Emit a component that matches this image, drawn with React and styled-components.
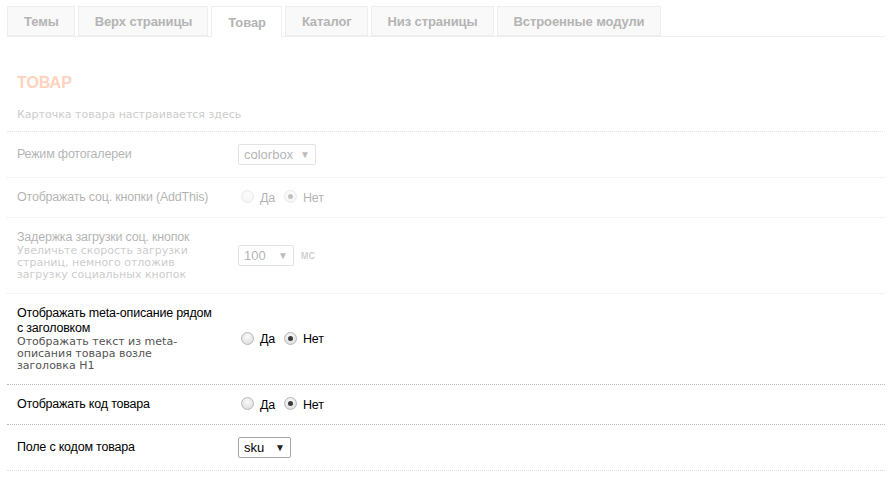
import React from "react";
import styled, { createGlobalStyle } from "styled-components";

const Global = createGlobalStyle`
  html, body { margin: 0; padding: 0; background: #fff; }
  body { font-family: "Liberation Sans", Arial, sans-serif; font-size: 13px; color: #000; }
`;

const Page = styled.div`
  padding: 6px 6px 0 7px;
`;

const TabBar = styled.div`
  display: flex;
  gap: 3px;
  border-bottom: 1px solid #eee;
  height: 30px;
`;

const Tab = styled.div`
  height: ${(p) => (p.$active ? "31px" : "30px")};
  box-sizing: border-box;
  padding: 0 15px 0 16px;
  display: flex;
  align-items: center;
  border: 1px solid #eee;
  border-bottom: ${(p) => (p.$active ? "none" : "1px solid #eee")};
  background: ${(p) => (p.$active ? "#fff" : "#f9f9f9")};
  color: #b4b4b4;
  font-weight: bold;
  font-size: 13px;
  letter-spacing: -0.1px;
  font-family: "Liberation Sans", Arial, sans-serif;
`;

const Heading = styled.h2`
  margin: 37px 0 0;
  padding-left: 10px;
  font-size: 16px;
  line-height: 18px;
  font-weight: bold;
  color: #fdd3bd;
  font-family: "Liberation Sans", Arial, sans-serif;
`;

const Description = styled.p`
  margin: 16px 0 0;
  padding: 0 0 9px 10px;
  font-family: "DejaVu Sans", Verdana, sans-serif;
  font-size: 11px;
  line-height: 14px;
  color: #ccc;
  border-bottom: 1px dotted #e3e3e3;
`;

const Row = styled.div`
  display: flex;
  align-items: center;
  gap: 21px;
  padding: 12px 0 12px 10px;
  border-bottom: 1px dotted ${(p) => (p.$faint ? "#ddd" : "#bbb")};
  opacity: ${(p) => (p.$disabled ? 0.3 : 1)};
`;

const LabelCol = styled.div`
  width: 200px;
  flex: none;
`;

const Label = styled.div`
  font-size: 12.5px;
  letter-spacing: -0.2px;
  line-height: 15px;
  color: #000;
`;

const Hint = styled.div`
  max-width: 180px;
  font-family: "DejaVu Sans", Verdana, sans-serif;
  font-size: 11px;
  line-height: 12px;
  color: #555;
`;

const Value = styled.div`
  display: flex;
  align-items: center;
  gap: 7px;
`;

const Select = styled.div`
  box-sizing: border-box;
  width: ${(p) => p.$w}px;
  height: 21px;
  border: 1px solid #a6a6a6;
  border-radius: 2px;
  background: #fff;
  display: flex;
  align-items: center;
  justify-content: space-between;
  padding: 0 5px 0 5px;
  font-size: 13px;
  color: #000;
`;

const Arrow = styled.span`
  font-size: 10px;
  line-height: 1;
  color: #222;
`;

const Unit = styled.span`
  font-family: "Liberation Mono", monospace;
  font-size: 12px;
  color: #444;
`;

const RadioGroup = styled.div`
  display: flex;
  align-items: center;
  padding-left: 3px;
  height: 14px;
`;

const RadioItem = styled.label`
  display: flex;
  align-items: center;
  gap: 6px;
  margin-right: 9px;
  font-size: 12.5px;
  letter-spacing: -0.2px;
  line-height: 14px;
`;

const RadioDot = styled.span`
  width: 13px;
  height: 13px;
  box-sizing: border-box;
  border-radius: 50%;
  border: 1px solid #b8b8b8;
  background: radial-gradient(circle at 50% 35%, #fafafa 0%, #e6e6e6 60%, #d4d4d4 100%);
  display: flex;
  align-items: center;
  justify-content: center;
  position: relative;
  top: -1px;
  &::after {
    content: "";
    width: 5px;
    height: 5px;
    border-radius: 50%;
    background: #3a3a3a;
    display: ${(p) => (p.$checked ? "block" : "none")};
  }
`;

const Radio = ({ checked, children }) => (
  <RadioItem>
    <RadioDot $checked={checked} />
    {children}
  </RadioItem>
);

const YesNo = () => (
  <RadioGroup>
    <Radio>Да</Radio>
    <Radio checked>Нет</Radio>
  </RadioGroup>
);

const tabs = ["Темы", "Верх страницы", "Товар", "Каталог", "Низ страницы", "Встроенные модули"];

export default function App() {
  return (
    <Page>
      <Global />
      <TabBar>
        {tabs.map((t) => (
          <Tab key={t} $active={t === "Товар"}>{t}</Tab>
        ))}
      </TabBar>
      <Heading>ТОВАР</Heading>
      <Description>Карточка товара настраивается здесь</Description>

      <Row $disabled>
        <LabelCol><Label>Режим фотогалереи</Label></LabelCol>
        <Value>
          <Select $w={78}>colorbox<Arrow>▼</Arrow></Select>
        </Value>
      </Row>
      <Row $disabled>
        <LabelCol><Label>Отображать соц. кнопки (AddThis)</Label></LabelCol>
        <Value><YesNo /></Value>
      </Row>
      <Row $disabled>
        <LabelCol>
          <Label>Задержка загрузки соц. кнопок</Label>
          <Hint>Увеличьте скорость загрузки страниц, немного отложив загрузку социальных кнопок</Hint>
        </LabelCol>
        <Value>
          <Select $w={56}>100<Arrow>▼</Arrow></Select>
          <Unit>мс</Unit>
        </Value>
      </Row>
      <Row>
        <LabelCol>
          <Label>Отображать meta-описание рядом с заголовком</Label>
          <Hint>Отображать текст из meta-описания товара возле заголовка H1</Hint>
        </LabelCol>
        <Value><YesNo /></Value>
      </Row>
      <Row>
        <LabelCol><Label>Отображать код товара</Label></LabelCol>
        <Value><YesNo /></Value>
      </Row>
      <Row $faint>
        <LabelCol><Label>Поле с кодом товара</Label></LabelCol>
        <Value>
          <Select $w={53}>sku<Arrow>▼</Arrow></Select>
        </Value>
      </Row>
    </Page>
  );
}
